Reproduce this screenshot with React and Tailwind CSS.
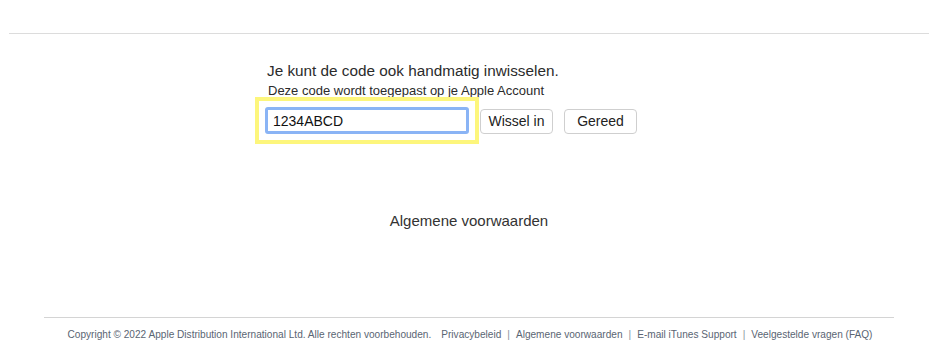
import React from "react";

const links = ["Privacybeleid", "Algemene voorwaarden", "E-mail iTunes Support", "Veelgestelde vragen (FAQ)"];

export default function App() {
  return (
    <div className="w-[932px] h-[362px] bg-white font-['Liberation_Sans',Arial,sans-serif] text-[#333] flex flex-col">
      <div className="h-[33px]" />
      <div className="mx-[9px] mr-[3px] h-px bg-[#dcdcdc]" />

      {/* redeem form */}
      <div className="w-[404px] mx-auto pl-[1px] mt-[27px]">
        <p className="text-[15.3px] leading-[19px] pl-[2px] text-[#2b2b2b]">Je kunt de code ook handmatig inwisselen.</p>
        <p className="text-[13px] leading-[16px] pl-[3px] mt-[3px] text-[#2b2b2b]">Deze code wordt toegepast op je Apple Account</p>
        <div className="flex items-end gap-[11px] mt-[8px]">
          <div className="relative">
            <input
              readOnly
              value="1234ABCD"
              className="block w-[204px] h-[27px] border-[3px] border-[#8ab4f5] rounded-[3px] px-[5px] text-[14px] text-[#111] outline-none bg-white"
            />
            {/* highlight frame */}
            <div className="absolute -inset-[10px] border-4 border-[#fdf67c] pointer-events-none" />
          </div>
          <div className="flex gap-[11px]">
            <button className="h-[25px] w-[73px] border border-[#cfcfcf] rounded-[4px] bg-white text-[14px] text-[#222]">Wissel in</button>
            <button className="h-[25px] w-[73px] border border-[#cfcfcf] rounded-[4px] bg-white text-[14px] text-[#222]">Gereed</button>
          </div>
        </div>
      </div>

      <div className="text-center mt-[78px] text-[15px] leading-[18px] text-[#333] pl-[6px]">Algemene voorwaarden</div>

      <div className="mt-[87px] mx-[44px] mr-[38px] h-px bg-[#d4d4d4]" />
      <div className="mt-[10px] text-center text-[10.1px] leading-[14px] text-[#5a6573] pl-[8px]">
        <span>Copyright © 2022 Apple Distribution International Ltd. Alle rechten voorbehouden.</span>
        <span className="ml-[10px]">{links[0]}</span>
        {links.slice(1).map((l) => (
          <span key={l}>
            <span className="mx-[6px] text-[#8a929c]">|</span>
            {l}
          </span>
        ))}
      </div>
    </div>
  );
}
